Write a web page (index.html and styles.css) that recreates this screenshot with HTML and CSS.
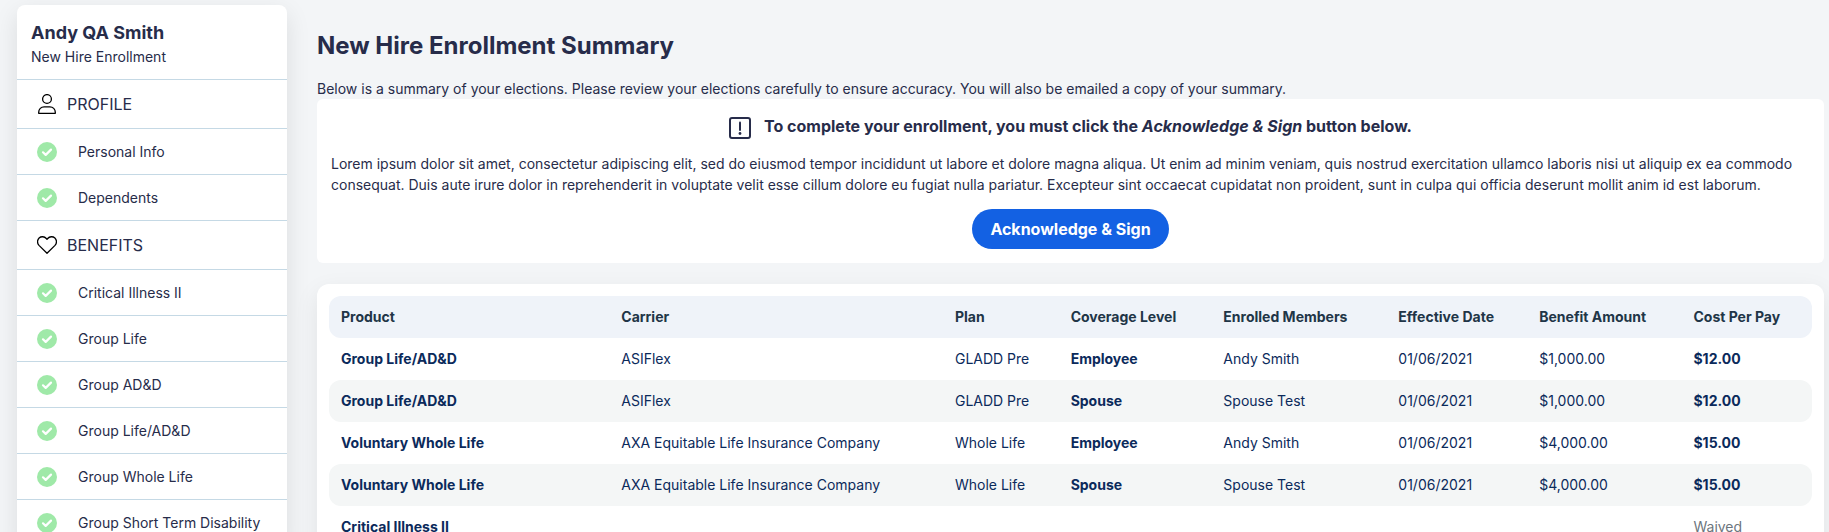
FILE: index.html
```
<!DOCTYPE html>
<html lang="en">
<head>
  <meta charset="UTF-8">
  <meta name="viewport" content="width=device-width, initial-scale=1.0">
  <title>New Hire Enrollment Summary</title>
  <link rel="stylesheet" href="styles.css">
</head>
<body>
  <svg class="sprite" aria-hidden="true">
    <symbol id="check" viewBox="0 0 20 20">
      <circle cx="10" cy="10" r="10" fill="#9fe9a8"/>
      <path d="M6 10.300l2.700 2.600 5.300-5.300" fill="none" stroke="#fff" stroke-width="2.200" stroke-linecap="round" stroke-linejoin="round"/>
    </symbol>
  </svg>
  <div class="page">
    <aside class="sidebar">
      <div class="sidebar-header">
        <div class="user-name">Andy QA Smith</div>
        <div class="event-name">New Hire Enrollment</div>
      </div>
      <nav>
        <div class="section-title">
          <svg class="icon" viewBox="0 0 20 20" fill="none" stroke="#000" stroke-width="1.3">
            <circle cx="10" cy="5" r="4.4"/>
            <path d="M1.7 19.3v-1.1c0-3 2.4-5.4 5.4-5.4h5.8c3 0 5.4 2.4 5.4 5.4v1.1z" stroke-linejoin="round"/>
          </svg>
          PROFILE
        </div>
        <a class="nav-item" href="#"><svg class="icon"><use href="#check"/></svg>Personal Info</a>
        <a class="nav-item" href="#"><svg class="icon"><use href="#check"/></svg>Dependents</a>
        <div class="section-title">
          <svg class="icon" viewBox="0 0 20 20" fill="none" stroke="#000" stroke-width="1.3">
            <path d="M10 18.3L2 10.4C-.1 8.2.2 4.8 2.1 3c2.1-1.9 5.3-1.6 7.2.5L10 4.300l.7-.8c1.900-2.100 5.100-2.400 7.200-.5 1.900 1.800 2.200 5.200.1 7.400z" stroke-linejoin="round"/>
          </svg>
          BENEFITS
        </div>
        <a class="nav-item" href="#"><svg class="icon"><use href="#check"/></svg>Critical Illness II</a>
        <a class="nav-item" href="#"><svg class="icon"><use href="#check"/></svg>Group Life</a>
        <a class="nav-item" href="#"><svg class="icon"><use href="#check"/></svg>Group AD&amp;D</a>
        <a class="nav-item" href="#"><svg class="icon"><use href="#check"/></svg>Group Life/AD&amp;D</a>
        <a class="nav-item" href="#"><svg class="icon"><use href="#check"/></svg>Group Whole Life</a>
        <a class="nav-item" href="#"><svg class="icon"><use href="#check"/></svg>Group Short Term Disability</a>
      </nav>
    </aside>

    <main class="content">
      <h1>New Hire Enrollment Summary</h1>
      <p class="intro">Below is a summary of your elections. Please review your elections carefully to ensure accuracy. You will also be emailed a copy of your summary.</p>

      <section class="notice">
        <div class="notice-title">
          <svg class="notice-icon" viewBox="0 0 22 22" fill="none" stroke="#272c4a" stroke-width="2">
            <rect x="1" y="1" width="20" height="20" rx="2"/>
            <path d="M11 5.500v7.500" stroke-linecap="round"/>
            <circle cx="11" cy="16.500" r="1.400" fill="#272c4a" stroke="none"/>
          </svg>
          <span>To complete your enrollment, you must click the <em>Acknowledge &amp; Sign</em> button below.</span>
        </div>
        <p>Lorem ipsum dolor sit amet, consectetur adipiscing elit, sed do eiusmod tempor incididunt ut labore et dolore magna aliqua. Ut enim ad minim veniam, quis nostrud exercitation ullamco laboris nisi ut aliquip ex ea commodo consequat. Duis aute irure dolor in reprehenderit in voluptate velit esse cillum dolore eu fugiat nulla pariatur. Excepteur sint occaecat cupidatat non proident, sunt in culpa qui officia deserunt mollit anim id est laborum.</p>
        <button class="sign-button" type="button">Acknowledge &amp; Sign</button>
      </section>

      <section class="summary">
        <table>
          <colgroup>
            <col class="col-product">
            <col class="col-carrier">
            <col class="col-plan">
            <col class="col-coverage">
            <col class="col-members">
            <col class="col-date">
            <col class="col-amount">
            <col class="col-cost">
          </colgroup>
          <thead>
            <tr>
              <th>Product</th>
              <th>Carrier</th>
              <th>Plan</th>
              <th>Coverage Level</th>
              <th>Enrolled Members</th>
              <th>Effective Date</th>
              <th>Benefit Amount</th>
              <th>Cost Per Pay</th>
            </tr>
          </thead>
          <tbody>
            <tr>
              <td class="strong">Group Life/AD&amp;D</td>
              <td>ASIFlex</td>
              <td>GLADD Pre</td>
              <td class="strong">Employee</td>
              <td>Andy Smith</td>
              <td>01/06/2021</td>
              <td>$1,000.00</td>
              <td class="strong">$12.00</td>
            </tr>
            <tr>
              <td class="strong">Group Life/AD&amp;D</td>
              <td>ASIFlex</td>
              <td>GLADD Pre</td>
              <td class="strong">Spouse</td>
              <td>Spouse Test</td>
              <td>01/06/2021</td>
              <td>$1,000.00</td>
              <td class="strong">$12.00</td>
            </tr>
            <tr>
              <td class="strong">Voluntary Whole Life</td>
              <td>AXA Equitable Life Insurance Company</td>
              <td>Whole Life</td>
              <td class="strong">Employee</td>
              <td>Andy Smith</td>
              <td>01/06/2021</td>
              <td>$4,000.00</td>
              <td class="strong">$15.00</td>
            </tr>
            <tr>
              <td class="strong">Voluntary Whole Life</td>
              <td>AXA Equitable Life Insurance Company</td>
              <td>Whole Life</td>
              <td class="strong">Spouse</td>
              <td>Spouse Test</td>
              <td>01/06/2021</td>
              <td>$4,000.00</td>
              <td class="strong">$15.00</td>
            </tr>
            <tr>
              <td class="strong">Critical Illness II</td>
              <td></td>
              <td></td>
              <td></td>
              <td></td>
              <td></td>
              <td></td>
              <td class="waived">Waived</td>
            </tr>
          </tbody>
        </table>
      </section>
    </main>
  </div>
</body>
</html>
```
FILE: styles.css
```
* {
  box-sizing: border-box;
}

html {
  height: 100%;
  overflow: hidden;
}

body {
  margin: 0;
  height: 100%;
  overflow: hidden;
  background: #f3f5f7;
  color: #272c4a;
  font-family: Inter, sans-serif;
  font-size: 14px;
  line-height: 21px;
}

.sprite {
  display: none;
}

.page {
  display: flex;
  align-items: flex-start;
  gap: 30px;
  padding: 5px 5px 0 17px;
}

.sidebar {
  flex: 0 0 270px;
  background: #fff;
  border-radius: 8px;
  box-shadow: 0 8px 24px rgba(0, 0, 0, 0.1);
}

.sidebar-header {
  padding: 16px 14px 11px;
  border-bottom: 1px solid #c5d9e5;
}

.user-name {
  font-size: 18px;
  font-weight: 700;
  line-height: 24px;
}

.event-name {
  line-height: 23px;
}

.section-title,
.nav-item {
  display: flex;
  align-items: center;
  padding-left: 20px;
  border-bottom: 1px solid #c5d9e5;
}

.section-title {
  gap: 10px;
  height: 49px;
  font-size: 16px;
}

.nav-item {
  gap: 21px;
  height: 46px;
  color: inherit;
  text-decoration: none;
}

.icon {
  flex: none;
  width: 20px;
  height: 20px;
}

.content {
  flex: 1;
  min-width: 0;
}

h1 {
  margin: 0;
  padding: 25px 0 17px;
  font-size: 24px;
  font-weight: 700;
  line-height: 32px;
}

p {
  margin: 0;
}

.intro {
  line-height: 20px;
}

.notice {
  display: flex;
  flex-direction: column;
  align-items: center;
  margin-bottom: 21px;
  padding: 14px;
  background: #fff;
  border-radius: 6px;
}

.notice-title {
  display: flex;
  align-items: flex-end;
  gap: 13px;
  margin-bottom: 14px;
  font-size: 16px;
  font-weight: 700;
  line-height: 26px;
}

.notice-icon {
  width: 22px;
  height: 22px;
}

.sign-button {
  height: 40px;
  margin-top: 14px;
  padding: 0 18px;
  border: 0;
  border-radius: 20px;
  background: #1361e3;
  color: #fff;
  font-family: inherit;
  font-size: 16px;
  font-weight: 700;
  cursor: pointer;
}

.summary {
  padding: 12px;
  background: #fff;
  border-radius: 12px;
  box-shadow: 0 8px 24px rgba(0, 0, 0, 0.08);
}

table {
  width: 100%;
  table-layout: fixed;
  border-collapse: collapse;
  color: #0b2a5b;
}

.col-product { width: 18.9%; }
.col-carrier { width: 22.5%; }
.col-plan { width: 7.8%; }
.col-coverage { width: 10.3%; }
.col-members { width: 11.8%; }
.col-date { width: 9.5%; }
.col-amount { width: 10.4%; }
.col-cost { width: 8.8%; }

th,
td {
  padding: 10px 12px 11px;
  text-align: left;
  white-space: nowrap;
}

th {
  background: #eff3f9;
  color: #213547;
  font-weight: 700;
}

tbody tr:nth-child(even) td {
  background: #f4f6f6;
}

th:first-child,
td:first-child {
  border-radius: 12px 0 0 12px;
}

th:last-child,
td:last-child {
  border-radius: 0 12px 12px 0;
}

.strong {
  font-weight: 700;
}

.waived {
  color: #6c757d;
}
```
